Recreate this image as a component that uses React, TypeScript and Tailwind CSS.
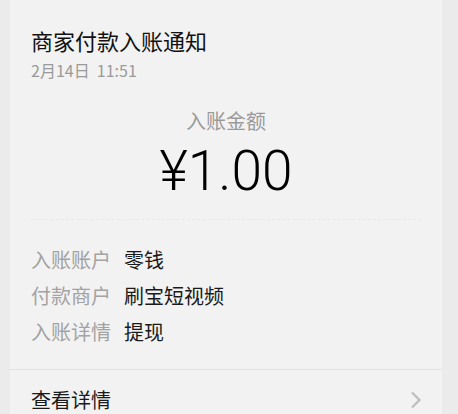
const rows = [
  { label: "入账账户", value: "零钱" },
  { label: "付款商户", value: "刷宝短视频" },
  { label: "入账详情", value: "提现" },
];

export default function App() {
  return (
    <div
      className="w-[458px] h-[414px] overflow-hidden bg-[#ebebeb] pl-[10px]"
      style={{ fontFamily: '"Noto Sans CJK SC", "Noto Sans", sans-serif' }}
    >
      <div className="w-[432px] h-full bg-[#f2f2f2] flex flex-col">
        {/* header */}
        <div className="px-[21px] pt-[25px]">
          <div className="text-[22px] leading-[30px] text-[#111]">商家付款入账通知</div>
          <div className="mt-[5px] text-[16px] leading-[20px] text-[#9a9a9a]">2月14日&nbsp;&nbsp;11:51</div>
        </div>

        {/* amount */}
        <div className="flex flex-col items-center mt-[27px]">
          <div className="text-[20px] leading-[28px] text-[#9a9a9a]">入账金额</div>
          <div className="mt-[6px] font-['Roboto',sans-serif] text-[55px] leading-[60px] font-light text-black">¥1.00</div>
        </div>

        <div className="mx-[21px] mt-[18px] border-t border-dashed border-[#e9e9e9]" />

        {/* details */}
        <div className="px-[21px] pt-[22px] pb-[19px]">
          {rows.map((r) => (
            <div key={r.label} className="flex text-[20px] leading-[36px]">
              <span className="w-[93px] text-[#a3a3a3]">{r.label}</span>
              <span className="text-[#1a1a1a]">{r.value}</span>
            </div>
          ))}
        </div>

        <div className="border-t border-[#e3e3e3]" />

        <div className="flex items-center justify-between pl-[21px] pr-[20px] pt-[16px]">
          <span className="text-[20px] leading-[28px] text-[#1a1a1a]">查看详情</span>
          <svg width="12" height="18" viewBox="0 0 12 18" fill="none">
            <path d="M2 1.5 L9.5 9 L2 16.5" stroke="#bdbdbd" strokeWidth="2.2" />
          </svg>
        </div>
      </div>
    </div>
  );
}
